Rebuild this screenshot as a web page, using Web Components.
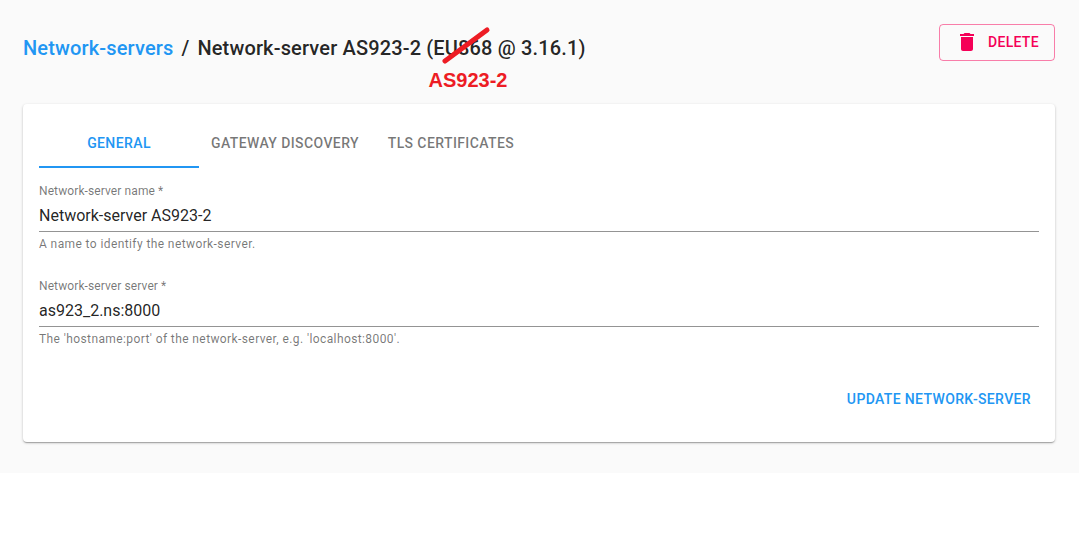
<!DOCTYPE html>
<html>
<head>
<meta charset="utf-8">
<title>Network-server</title>
<style>
html, body { margin: 0; background: #fff; }
body { font-family: Roboto, "Liberation Sans", sans-serif; }
</style>
</head>
<body>
<ns-page>
    <ns-header slot="header">
        <a slot="link">Network-servers</a>
        <span slot="title">Network-server AS923-2 (EU868 @ 3.16.1)</span>
        <ns-delete-button slot="action">Delete</ns-delete-button>
    </ns-header>
    <ns-card>
        <ns-tabs>
            <ns-tab active>General</ns-tab>
            <ns-tab>Gateway Discovery</ns-tab>
            <ns-tab>TLS Certificates</ns-tab>
        </ns-tabs>
        <ns-field label="Network-server name *" value="Network-server AS923-2" help="A name to identify the network-server."></ns-field>
        <ns-field label="Network-server server *" value="as923_2.ns:8000" help="The 'hostname:port' of the network-server, e.g. 'localhost:8000'."></ns-field>
        <ns-card-actions>Update network-server</ns-card-actions>
    </ns-card>
</ns-page>

<script>
class NsPage extends HTMLElement {
    constructor() {
        super();
        this.attachShadow({ mode: 'open' });
    }

    connectedCallback() {
        this.shadowRoot.innerHTML = `
            <style>
            :host {
                display: block;
                box-sizing: border-box;
                height: 473px;
                padding: 24px 24px 0 23px;
                background: #fafafa;
            }
            </style>
            <slot name="header"></slot>
            <slot></slot>
        `;
    }
}

class NsHeader extends HTMLElement {
    constructor() {
        super();
        this.attachShadow({ mode: 'open' });
    }

    connectedCallback() {
        this.shadowRoot.innerHTML = `
            <style>
            :host {
                display: flex;
                justify-content: space-between;
                align-items: flex-start;
                height: 80px;
                position: relative;
            }
            .title {
                display: flex;
                align-items: center;
                height: 48px;
                font-size: 20px;
                font-weight: 500;
                line-height: 48px;
                letter-spacing: 0.15px;
                color: rgba(0, 0, 0, 0.87);
                white-space: nowrap;
            }
            ::slotted(a) {
                color: #2196f3;
            }
            .sep {
                margin: 0 8px;
            }
            .fix {
                position: absolute;
                left: 0;
                top: 0;
            }
            .label {
                position: absolute;
                left: 405.5px;
                top: 44px;
                font-family: "Liberation Sans", Arial, sans-serif;
                font-size: 20px;
                font-weight: 700;
                line-height: 24px;
                color: #ed1c24;
                white-space: nowrap;
            }
            </style>
            <div class="title">
                <slot name="link"></slot>
                <span class="sep">/</span>
                <slot name="title"></slot>
            </div>
            <slot name="action"></slot>
            <svg class="fix" width="500" height="50" viewBox="0 0 500 50">
                <line x1="422" y1="37" x2="464" y2="6" stroke="#ed1c24" stroke-width="5" stroke-linecap="round"/>
            </svg>
            <span class="label">AS923-2</span>
        `;
    }
}

class NsDeleteButton extends HTMLElement {
    constructor() {
        super();
        this.attachShadow({ mode: 'open' });
    }

    connectedCallback() {
        this.shadowRoot.innerHTML = `
            <style>
            :host {
                display: flex;
                align-items: center;
                box-sizing: border-box;
                width: 116px;
                height: 37px;
                padding: 0 0 2px 15px;
                border: 1px solid rgba(245, 0, 87, 0.5);
                border-radius: 4px;
                color: #f50057;
                font-size: 14px;
                font-weight: 500;
                letter-spacing: 0.3px;
                text-transform: uppercase;
            }
            svg {
                width: 24px;
                height: 24px;
                margin-right: 9px;
                fill: currentColor;
            }
            </style>
            <svg viewBox="0 0 24 24"><path d="M6 19c0 1.1.9 2 2 2h8c1.1 0 2-.9 2-2V7H6v12zM19 4h-3.5l-1-1h-5l-1 1H5v2h14V4z"/></svg>
            <slot></slot>
        `;
    }
}

class NsCard extends HTMLElement {
    constructor() {
        super();
        this.attachShadow({ mode: 'open' });
    }

    connectedCallback() {
        this.shadowRoot.innerHTML = `
            <style>
            :host {
                display: block;
                box-sizing: border-box;
                height: 338px;
                padding: 16px;
                background: #fff;
                border-radius: 4px;
                box-shadow: 0 1px 3px 0 rgba(0,0,0,0.2), 0 1px 1px 0 rgba(0,0,0,0.14), 0 2px 1px -1px rgba(0,0,0,0.12);
            }
            </style>
            <slot></slot>
        `;
    }
}

class NsTabs extends HTMLElement {
    constructor() {
        super();
        this.attachShadow({ mode: 'open' });
    }

    connectedCallback() {
        this.shadowRoot.innerHTML = `
            <style>
            :host {
                display: flex;
                height: 48px;
                margin-bottom: 16px;
            }
            </style>
            <slot></slot>
        `;
    }
}

class NsTab extends HTMLElement {
    constructor() {
        super();
        this.attachShadow({ mode: 'open' });
    }

    connectedCallback() {
        this.shadowRoot.innerHTML = `
            <style>
            :host {
                display: flex;
                justify-content: center;
                align-items: center;
                box-sizing: border-box;
                min-width: 160px;
                height: 48px;
                padding: 0 12px 2px;
                font-size: 14px;
                font-weight: 500;
                letter-spacing: 0.4px;
                text-transform: uppercase;
                color: rgba(0, 0, 0, 0.54);
            }
            :host([active]) {
                color: #2196f3;
                border-bottom: 2px solid #2196f3;
                padding-bottom: 0;
            }
            </style>
            <slot></slot>
        `;
    }
}

class NsField extends HTMLElement {
    constructor() {
        super();
        this.attachShadow({ mode: 'open' });
    }

    connectedCallback() {
        this.shadowRoot.innerHTML = `
            <style>
            :host {
                display: block;
                height: 95px;
            }
            .label {
                font-size: 12px;
                line-height: 14px;
                letter-spacing: 0.1px;
                color: rgba(0, 0, 0, 0.54);
            }
            .value {
                box-sizing: border-box;
                height: 34px;
                padding-top: 8px;
                border-bottom: 1px solid rgba(0, 0, 0, 0.42);
                font-size: 16px;
                line-height: 20px;
                color: rgba(0, 0, 0, 0.87);
            }
            .help {
                margin-top: 5px;
                font-size: 12px;
                line-height: 14px;
                letter-spacing: 0.4px;
                color: rgba(0, 0, 0, 0.54);
            }
            </style>
            <div class="label">${this.getAttribute('label')}</div>
            <div class="value">${this.getAttribute('value')}</div>
            <div class="help">${this.getAttribute('help')}</div>
        `;
    }
}

class NsCardActions extends HTMLElement {
    constructor() {
        super();
        this.attachShadow({ mode: 'open' });
    }

    connectedCallback() {
        this.shadowRoot.innerHTML = `
            <style>
            :host {
                display: flex;
                justify-content: flex-end;
                padding: 15px 8px 0 0;
                font-size: 14px;
                font-weight: 500;
                line-height: 20px;
                letter-spacing: 0.36px;
                text-transform: uppercase;
                color: #2196f3;
            }
            </style>
            <slot></slot>
        `;
    }
}

customElements.define('ns-page', NsPage);
customElements.define('ns-header', NsHeader);
customElements.define('ns-delete-button', NsDeleteButton);
customElements.define('ns-card', NsCard);
customElements.define('ns-tabs', NsTabs);
customElements.define('ns-tab', NsTab);
customElements.define('ns-field', NsField);
customElements.define('ns-card-actions', NsCardActions);
</script>
</body>
</html>
